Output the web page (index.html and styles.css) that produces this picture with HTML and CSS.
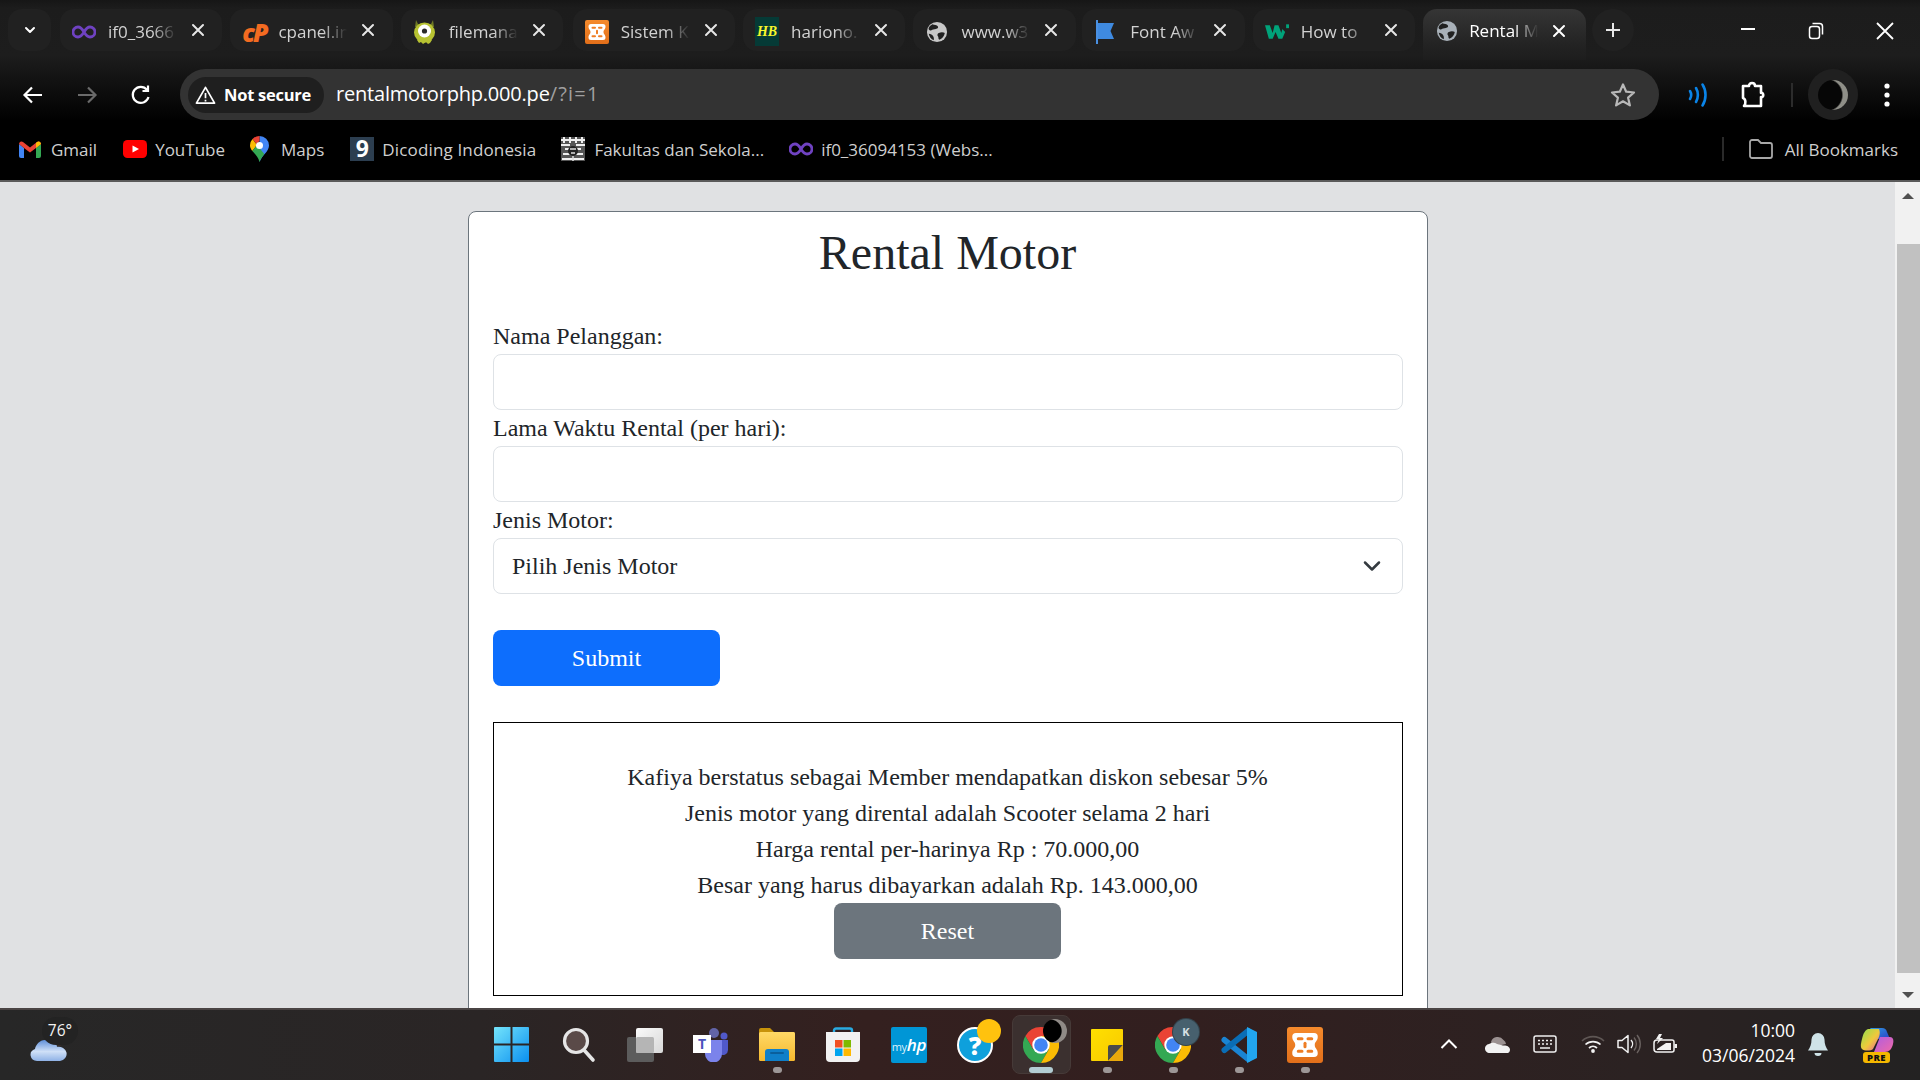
FILE: index.html
```html
<!DOCTYPE html>
<html lang="id">
<head>
<meta charset="utf-8">
<title>Rental Motor</title>
<link rel="stylesheet" href="styles.css">
</head>
<body>
<svg class="defs" width="0" height="0" aria-hidden="true">
  <defs>
    <symbol id="globe" viewBox="0 0 24 24">
      <circle cx="12" cy="12" r="11" fill="currentColor"/>
      <path d="M7 3.500c2 1 5 .5 6 2.500s-2 3-4 3-3 2-5 1-1.500-4 3-6.500zM14 13c2-1 5-1 6.500 0-.5 3.500-3 6.500-6 7.500-1.500-1-.5-3-1.500-4s-.5-3 1-3.500zM3 14c2 0 4 1 5 3s.5 3 .5 4C5.500 20 3.500 17 3 14z" fill="#212121"/>
    </symbol>
    <symbol id="infinity" viewBox="0 0 24 14">
      <path d="M12 7C10 3.500 8 2 6 2a5 5 0 0 0 0 10c2 0 4-1.500 6-5zm0 0c2 3.500 4 5 6 5a5 5 0 0 0 0-10c-2 0-4 1.500-6 5z" fill="none" stroke="#6f42c1" stroke-width="2.800"/>
    </symbol>
    <symbol id="close" viewBox="0 0 14 14">
      <path d="M2 2l10 10M12 2L2 12" stroke="currentColor" stroke-width="2" stroke-linecap="round"/>
    </symbol>
    <linearGradient id="xg" x1="0" y1="0" x2="0" y2="1"><stop offset="0" stop-color="#f58a2c"/><stop offset="1" stop-color="#e26f1a"/></linearGradient>
    <symbol id="xampp" viewBox="0 0 24 24">
      <rect width="24" height="24" rx="2" fill="url(#xg)"/>
      <path d="M3.500 6.500a2.500 2.500 0 0 1 2.500-2.500h12a2.500 2.500 0 0 1 2.500 2.500c0 3-2 3-2 5.500s2 2.500 2 5.500a2.500 2.500 0 0 1-2.500 2.500H6a2.500 2.500 0 0 1-2.500-2.500c0-3 2-3 2-5.500s-2-2.500-2-5.500z" fill="#fff"/>
      <path d="M7.500 7.800h2.500M14 7.800h2.500M7.500 16.200h2.500M14 16.200h2.500" stroke="#ee7d24" stroke-width="2" stroke-linecap="round"/>
      <path d="M12 10.800v2.400" stroke="#ee7d24" stroke-width="2" stroke-linecap="round"/>
    </symbol>
    <symbol id="chrome" viewBox="0 0 36 36">
      <path d="M18 18L10.200 22.500 2.410 9A18 18 0 0 1 33.590 9H18z" fill="#ea4335"/>
      <path d="M18 18L25.800 22.500 18 36A18 18 0 0 1 2.410 9L10.200 22.500z" fill="#34a853"/>
      <path d="M18 18V9H33.590A18 18 0 0 1 18 36L25.800 22.500z" fill="#fbbc04"/>
      <circle cx="18" cy="18" r="8.700" fill="#fff"/>
      <circle cx="18" cy="18" r="6.800" fill="#4285f4"/>
    </symbol>
  </defs>
</svg>

<div class="screen">
  <header class="chrome">
    <div class="tabstrip">
      <div class="tab-menu">
        <svg width="14" height="14" viewBox="0 0 14 14"><path d="M3 5l4 4 4-4" fill="none" stroke="#fff" stroke-width="2" stroke-linecap="round" stroke-linejoin="round"/></svg>
      </div>
      <div class="tabs">
        <div class="tab">
          <span class="favicon"><svg width="24" height="14"><use href="#infinity"/></svg></span>
          <span class="tab-title">if0_3666</span>
          <svg class="tab-close" width="14" height="14"><use href="#close"/></svg>
        </div>
        <div class="tab">
          <span class="favicon"><span class="cp-icon">cP</span></span>
          <span class="tab-title">cpanel.in</span>
          <svg class="tab-close" width="14" height="14"><use href="#close"/></svg>
        </div>
        <div class="tab">
          <span class="favicon">
            <svg width="21" height="24" viewBox="0 0 21 24"><path d="M2 0l2 4h13l2-4 1 7H1z" fill="#6f7a24"/><ellipse cx="10.500" cy="12.500" rx="10.500" ry="10" fill="#b7c232"/><path d="M3 20l2 3 2-1 2 2 3-2 2 2 2-1 2-3z" fill="#b7c232"/><circle cx="10.500" cy="11" r="6.500" fill="#fff"/><circle cx="10.500" cy="11" r="2.600" fill="#2a2a2a"/></svg>
          </span>
          <span class="tab-title">filemana</span>
          <svg class="tab-close" width="14" height="14"><use href="#close"/></svg>
        </div>
        <div class="tab tab-push">
          <span class="favicon"><svg width="24" height="24"><use href="#xampp"/></svg></span>
          <span class="tab-title">Sistem K</span>
          <svg class="tab-close" width="14" height="14"><use href="#close"/></svg>
        </div>
        <div class="tab">
          <span class="favicon"><span class="hb-icon">HB</span></span>
          <span class="tab-title">hariono.</span>
          <svg class="tab-close" width="14" height="14"><use href="#close"/></svg>
        </div>
        <div class="tab tab-pull">
          <span class="favicon globe-icon"><svg width="22" height="22"><use href="#globe"/></svg></span>
          <span class="tab-title">www.w3</span>
          <svg class="tab-close" width="14" height="14"><use href="#close"/></svg>
        </div>
        <div class="tab">
          <span class="favicon">
            <svg width="20" height="24" viewBox="0 0 20 24"><path d="M1 0v24" stroke="#4a90e2" stroke-width="2"/><path d="M2 3h16l-3.500 8 3.500 8H2z" fill="#3f8ae0"/></svg>
          </span>
          <span class="tab-title">Font Aw</span>
          <svg class="tab-close" width="14" height="14"><use href="#close"/></svg>
        </div>
        <div class="tab">
          <span class="favicon">
            <svg width="25" height="16" viewBox="0 0 25 16"><path d="M0 1h5l3 8 2-8h4l3 8 1-4 3 3-3 7h-4l-3-7-3 7H4z" fill="#00a37a"/><path d="M22 0h3v4h-3z" fill="#00a37a"/></svg>
          </span>
          <span class="tab-title">How to</span>
          <svg class="tab-close" width="14" height="14"><use href="#close"/></svg>
        </div>
        <div class="tab tab-active">
          <span class="favicon globe-icon-active"><svg width="22" height="22"><use href="#globe"/></svg></span>
          <span class="tab-title">Rental M</span>
          <svg class="tab-close" width="14" height="14"><use href="#close"/></svg>
        </div>
      </div>
      <div class="new-tab">
        <svg width="16" height="16" viewBox="0 0 16 16"><path d="M8 1v14M1 8h14" stroke="#e8e8e8" stroke-width="2"/></svg>
      </div>
      <div class="win-controls">
        <svg width="16" height="16" viewBox="0 0 16 16"><path d="M1 6h14" stroke="#fff" stroke-width="2"/></svg>
        <svg width="16" height="18" viewBox="0 0 16 18"><rect x="1.500" y="4.500" width="10" height="12" rx="2.500" fill="none" stroke="#fff" stroke-width="1.500"/><path d="M4.500 1.500h7a3 3 0 0 1 3 3v8" fill="none" stroke="#fff" stroke-width="1.500"/></svg>
        <svg width="18" height="18" viewBox="0 0 18 18"><path d="M1 1l16 16M17 1L1 17" stroke="#fff" stroke-width="1.800"/></svg>
      </div>
    </div>

    <div class="toolbar">
      <div class="nav-btn">
        <svg width="22" height="22" viewBox="0 0 22 22"><path d="M20 11H3M10 3.500L2.500 11l7.500 7.500" fill="none" stroke="#fff" stroke-width="2.200"/></svg>
      </div>
      <div class="nav-btn">
        <svg width="22" height="22" viewBox="0 0 22 22"><path d="M2 11h17M12 3.500l7.500 7.500-7.500 7.500" fill="none" stroke="#6a6a6a" stroke-width="2.200"/></svg>
      </div>
      <div class="nav-btn">
        <svg width="22" height="22" viewBox="0 0 22 22"><path d="M18.500 13a8 8 0 1 1-1.500-7.200M18 1.500V7h-5.500" fill="none" stroke="#fff" stroke-width="2.200"/></svg>
      </div>
      <div class="omnibox">
        <div class="chip">
          <svg width="21" height="20" viewBox="0 0 22 20"><path d="M11 2L1.500 18.500h19z" fill="none" stroke="#fff" stroke-width="1.800" stroke-linejoin="round"/><path d="M11 8v5.500M11 15v1.800" stroke="#fff" stroke-width="1.800"/></svg>
          <span class="chip-text">Not secure</span>
        </div>
        <span class="url">rentalmotorphp.000.pe<span class="url-dim">/?i=1</span></span>
        <svg class="star" width="26" height="26" viewBox="0 0 26 26"><path d="M13 2.500l3.200 7.200 7.800.8-5.900 5.200 1.800 7.700L13 19.300l-6.900 4.100 1.800-7.700L2 10.500l7.800-.8z" fill="none" stroke="#b8b8b8" stroke-width="2.200" stroke-linejoin="round"/></svg>
      </div>
      <div class="tool-btn">
        <svg width="22" height="26" viewBox="0 0 22 26"><path d="M3 9c1.500 2.500 1.500 5.500 0 8M9 6c2.500 4 2.500 10 0 14M15.500 2.500c4 6 4 15 0 21" fill="none" stroke="#0a84e8" stroke-width="2.600" stroke-linecap="round"/></svg>
      </div>
      <div class="tool-btn">
        <svg width="26" height="28" viewBox="0 0 26 28"><path d="M3 5h6c0-4 6-4 6 0h6v7c3-1 3 5 0 4v9H4c2-2 2-7-1-8z" fill="none" stroke="#fff" stroke-width="2.600" stroke-linejoin="round"/></svg>
      </div>
      <div class="tool-sep"></div>
      <div class="avatar">
        <span class="moon"></span>
      </div>
      <div class="tool-btn">
        <svg width="6" height="26" viewBox="0 0 6 26"><circle cx="3" cy="4" r="2.600" fill="#fff"/><circle cx="3" cy="13" r="2.600" fill="#fff"/><circle cx="3" cy="22" r="2.600" fill="#fff"/></svg>
      </div>
    </div>

    <nav class="bookmarks">
      <a class="bm bm-gmail">
        <svg width="22" height="18" viewBox="0 0 22 18"><path d="M0 4v12a2 2 0 0 0 2 2h3V8z" fill="#4285f4"/><path d="M22 4v12a2 2 0 0 1-2 2h-3V8z" fill="#34a853"/><path d="M0 4a2.500 2.500 0 0 1 4-2l7 5.500L18 2a2.500 2.500 0 0 1 4 2l-5 4-6 4.500L5 8z" fill="#ea4335"/><path d="M17 8l5-4a2.500 2.500 0 0 0-4-2l-1 1z" fill="#fbbc04"/></svg>
        <span>Gmail</span>
      </a>
      <a class="bm bm-yt">
        <svg width="24" height="18" viewBox="0 0 24 18"><rect width="24" height="18" rx="4.500" fill="#f00"/><path d="M9.500 5.500l6.500 3.500-6.500 3.500z" fill="#fff"/></svg>
        <span>YouTube</span>
      </a>
      <a class="bm bm-maps">
        <svg width="19" height="26" viewBox="0 0 19 26"><path d="M9.500 0A9.500 9.500 0 0 1 19 9.500c0 6-6.500 9-9.500 16.500z" fill="#4285f4"/><path d="M9.500 0A9.500 9.500 0 0 0 2.500 3l4 5 3-3z" fill="#ea4335"/><path d="M2.500 3A9.500 9.500 0 0 0 0 9.500c0 2 1 3.800 2.300 5.500L7 9z" fill="#fbbc04"/><path d="M2.300 15c2.700 3 5.800 6 7.200 11 1-3 3-5.500 4.800-8L7 9z" fill="#34a853"/><circle cx="9.500" cy="9.500" r="3.500" fill="#fff"/></svg>
        <span>Maps</span>
      </a>
      <a class="bm bm-dicoding">
        <span class="dicoding-icon">9</span>
        <span class="dicoding-text">Dicoding Indonesia</span>
      </a>
      <a class="bm bm-fakultas">
        <svg width="24" height="24" viewBox="0 0 24 24"><rect width="24" height="24" fill="#555"/><path d="M0 3h24M0 8h9M15 8h9M3 0v6M9 0v6M15 0v6M21 0v6M4 12h16M2 17h7M15 17h7M1 22h22" stroke="#eee" stroke-width="2"/><circle cx="12" cy="14" r="5" fill="#222"/><path d="M9 12h6M10 16h4M12 19v5" stroke="#ddd" stroke-width="1.500"/></svg>
        <span>Fakultas dan Sekola...</span>
      </a>
      <a class="bm bm-free">
        <svg width="24" height="14"><use href="#infinity"/></svg>
        <span>if0_36094153 (Webs...</span>
      </a>
      <div class="bm-sep"></div>
      <a class="bm bm-all">
        <svg width="24" height="20" viewBox="0 0 24 20"><path d="M1 3a2 2 0 0 1 2-2h6l3 3h9a2 2 0 0 1 2 2v11a2 2 0 0 1-2 2H3a2 2 0 0 1-2-2z" fill="none" stroke="#a8a8a8" stroke-width="1.800"/></svg>
        <span>All Bookmarks</span>
      </a>
    </nav>
  </header>

  <div class="viewport">
    <main class="page">
      <section class="card">
        <h1 class="title">Rental Motor</h1>
        <form class="form">
          <label class="label" for="nama">Nama Pelanggan:</label>
          <input class="control" id="nama" type="text">
          <label class="label" for="lama">Lama Waktu Rental (per hari):</label>
          <input class="control" id="lama" type="text">
          <label class="label" for="jenis">Jenis Motor:</label>
          <div class="select-wrap">
            <select class="control select" id="jenis">
              <option>Pilih Jenis Motor</option>
            </select>
            <svg class="select-arrow" width="18" height="14" viewBox="0 0 18 14"><path d="M2 3.500l7 7 7-7" fill="none" stroke="#343a40" stroke-width="2.500" stroke-linecap="round" stroke-linejoin="round"/></svg>
          </div>
          <button class="btn btn-primary" type="button">Submit</button>
        </form>
        <div class="result">
          <p class="result-line">Kafiya berstatus sebagai Member mendapatkan diskon sebesar 5%</p>
          <p class="result-line">Jenis motor yang dirental adalah Scooter selama 2 hari</p>
          <p class="result-line">Harga rental per-harinya Rp : 70.000,00</p>
          <p class="result-line">Besar yang harus dibayarkan adalah Rp. 143.000,00</p>
          <button class="btn btn-secondary" type="button">Reset</button>
        </div>
      </section>
    </main>
    <aside class="scrollbar">
      <div class="sb-btn"><span class="tri-up"></span></div>
      <div class="sb-track"><div class="sb-thumb"></div></div>
      <div class="sb-btn"><span class="tri-down"></span></div>
    </aside>
  </div>

  <footer class="taskbar">
    <div class="tb-left">
      <div class="weather">
        <svg class="cloud" width="38" height="23" viewBox="0 0 38 26" preserveAspectRatio="none"><defs><linearGradient id="cl" x1="0" y1="0" x2="0" y2="1"><stop offset="0" stop-color="#5f8fd8"/><stop offset=".55" stop-color="#cfe0f7"/><stop offset="1" stop-color="#8fb2e6"/></linearGradient></defs><rect x="24" y="2" width="8" height="6" fill="#e8742a"/><path d="M8 26a7 7 0 0 1-2-13.500C7 6 13 0 19 3c6 0 9 4 9 7a8 8 0 0 1 3 16z" fill="url(#cl)"/></svg>
        <span class="temp">76°</span>
      </div>
    </div>
    <div class="tb-center">
      <div class="tb-item tb-start">
        <svg width="35" height="35" viewBox="0 0 35 35"><defs><linearGradient id="w1" x1="0" y1="0" x2="1" y2="1"><stop offset="0" stop-color="#74e4fb"/><stop offset="1" stop-color="#0a8ff0"/></linearGradient></defs><path d="M1 0h15.500v16.500H0V1a1 1 0 0 1 1-1zM18.500 0H34a1 1 0 0 1 1 1v15.500H18.500zM0 18.500h16.500V35H1a1 1 0 0 1-1-1zM18.500 18.500H35V34a1 1 0 0 1-1 1H18.500z" fill="url(#w1)"/></svg>
      </div>
      <div class="tb-item">
        <svg width="34" height="36" viewBox="0 0 34 36"><circle cx="14" cy="14" r="11.500" fill="#5a4a48" stroke="#e6e6e6" stroke-width="3.200"/><path d="M22 23l9 10" stroke="#e6e6e6" stroke-width="3.600" stroke-linecap="round"/></svg>
      </div>
      <div class="tb-item">
        <svg width="36" height="34" viewBox="0 0 36 34"><defs><linearGradient id="tv" x1="0" y1="0" x2="1" y2="1"><stop offset="0" stop-color="#fafafa"/><stop offset="1" stop-color="#d8d8d8"/></linearGradient></defs><rect x="0" y="9" width="27" height="25" rx="2" fill="#5c5c5c"/><rect x="9" y="0" width="27" height="25" rx="2" fill="url(#tv)"/><rect x="9" y="9" width="18" height="16" rx="1.500" fill="#b5b5b5"/></svg>
      </div>
      <div class="tb-item">
        <svg width="36" height="34" viewBox="0 0 36 34"><circle cx="21" cy="5" r="5" fill="#6264a7"/><circle cx="31" cy="8" r="3.500" fill="#5059c9"/><path d="M26 12h9v10a5 5 0 0 1-8 4z" fill="#5059c9"/><path d="M12 12h17v14a8 8 0 0 1-17 0z" fill="#7b83eb"/></svg>
        <span class="teams-box">T</span>
      </div>
      <div class="tb-item">
        <svg width="36" height="33" viewBox="0 0 36 33"><defs><linearGradient id="f1" x1="0" y1="0" x2="0" y2="1"><stop offset="0" stop-color="#ffd966"/><stop offset="1" stop-color="#f5b82e"/></linearGradient></defs><path d="M0 2a2 2 0 0 1 2-2h9l4 4h19a2 2 0 0 1 2 2v3H0z" fill="#c8930a"/><rect y="4" width="36" height="29" rx="1.500" fill="url(#f1)"/><path d="M6 24a3 3 0 0 1 3-3h18a3 3 0 0 1 3 3v9H6z" fill="#0f7fc9"/><rect x="11" y="24" width="14" height="2" rx="1" fill="#0a5f9c"/></svg>
        <span class="run-dot"></span>
      </div>
      <div class="tb-item">
        <svg width="36" height="36" viewBox="0 0 36 36"><path d="M9 7V3.500A2 2 0 0 1 11 1.500h14a2 2 0 0 1 2 2V7" fill="none" stroke="#29abe2" stroke-width="2.400"/><path d="M1 5h34v26a4 4 0 0 1-4 4H5a4 4 0 0 1-4-4z" fill="#f2f2f2"/><rect x="10" y="13" width="7.500" height="7.500" fill="#f25022"/><rect x="18.500" y="13" width="7.500" height="7.500" fill="#7fba00"/><rect x="10" y="21.500" width="7.500" height="7.500" fill="#00a4ef"/><rect x="18.500" y="21.500" width="7.500" height="7.500" fill="#ffb900"/></svg>
      </div>
      <div class="tb-item">
        <span class="myhp">my<i>hp</i></span>
      </div>
      <div class="tb-item">
        <svg width="36" height="36" viewBox="0 0 36 36"><circle cx="18" cy="18" r="17" fill="#0ea0dc" stroke="#fff" stroke-width="2"/></svg>
        <span class="help-mark">?</span>
        <span class="help-badge"></span>
      </div>
      <div class="tb-item tb-active">
        <svg width="36" height="36"><use href="#chrome"/></svg>
        <span class="chrome-badge"></span>
        <span class="run-bar"></span>
      </div>
      <div class="tb-item">
        <svg width="32" height="32" viewBox="0 0 32 32"><defs><linearGradient id="st" x1="0" y1="0" x2="1" y2="1"><stop offset="0" stop-color="#ffe000"/><stop offset="1" stop-color="#f8c800"/></linearGradient></defs><rect width="32" height="32" rx="1" fill="url(#st)"/><path d="M17 32V18a2 2 0 0 1 2-2h13z" fill="#4a4a4a"/><path d="M32 16L17 32h15z" fill="#e8a80c"/></svg>
        <span class="run-dot"></span>
      </div>
      <div class="tb-item">
        <svg width="36" height="36"><use href="#chrome"/></svg>
        <span class="k-badge">K</span>
        <span class="run-dot"></span>
      </div>
      <div class="tb-item">
        <svg width="36" height="36" viewBox="0 0 36 36"><path d="M3.500 13L27 32" stroke="#1a84d2" stroke-width="6" stroke-linecap="round"/><path d="M27 4L3.500 23" stroke="#0a6db5" stroke-width="6" stroke-linecap="round"/><path d="M26 0l10 5v26l-10 5z" fill="#22a5ee"/></svg>
        <span class="run-dot"></span>
      </div>
      <div class="tb-item">
        <svg width="36" height="36"><use href="#xampp"/></svg>
        <span class="run-dot"></span>
      </div>
    </div>
    <div class="tray">
      <div class="tray-item">
        <svg width="18" height="12" viewBox="0 0 18 12"><path d="M1.500 10L9 2.500 16.500 10" fill="none" stroke="#fff" stroke-width="2"/></svg>
      </div>
      <div class="tray-item">
        <svg width="25" height="17" viewBox="0 0 25 17"><path d="M6 6a7 7 0 0 1 12.500-2A5 5 0 0 1 21 8L8 11z" fill="#9b9191"/><path d="M5 17a4.500 4.500 0 0 1-1-9c3-1 4-2 8 0l6 1.500c3-.5 7 1 7 4s-2 3.500-3 3.500z" fill="#f2f2f2"/></svg>
      </div>
      <div class="tray-item">
        <svg width="24" height="18" viewBox="0 0 24 18"><rect x="1" y="1" width="22" height="16" rx="2" fill="none" stroke="#f0f0f0" stroke-width="1.500"/><path d="M5 5.500h2M9 5.500h2M13 5.500h2M17 5.500h2M5 9h2M9 9h2M13 9h2M17 9h2M7 13h10" stroke="#f0f0f0" stroke-width="1.600"/></svg>
      </div>
      <div class="tray-item tray-wifi">
        <svg width="24" height="18" viewBox="0 0 24 18"><path d="M1 6a16 16 0 0 1 22 0" fill="none" stroke="#5e5654" stroke-width="1.600"/><path d="M4.500 9.500a11 11 0 0 1 15 0M8 13a6 6 0 0 1 8 0" fill="none" stroke="#f2f2f2" stroke-width="1.700"/><circle cx="12" cy="16" r="1.900" fill="#f2f2f2"/></svg>
      </div>
      <div class="tray-item tray-tight">
        <svg width="24" height="20" viewBox="0 0 24 20"><path d="M1 6.500h4L11 1.500v17L5 13.500H1z" fill="none" stroke="#f2f2f2" stroke-width="1.500" stroke-linejoin="round"/><path d="M14 6a6 6 0 0 1 0 8" fill="none" stroke="#f2f2f2" stroke-width="1.400"/><path d="M17 3.500a10 10 0 0 1 0 13M20 1a14 14 0 0 1 0 18" fill="none" stroke="#6a6260" stroke-width="1.400"/></svg>
      </div>
      <div class="tray-item tray-tight">
        <svg width="24" height="20" viewBox="0 0 24 20"><path d="M1 9a3 3 0 0 1 3-3h15a2 2 0 0 1 2 2v8a2 2 0 0 1-2 2H4a3 3 0 0 1-3-3z" fill="none" stroke="#f2f2f2" stroke-width="1.500"/><path d="M6 0L3 5h3l-2 5 6-6H7l2-4z" fill="#f2f2f2"/><rect x="21.500" y="10" width="2.500" height="4" fill="#f2f2f2"/><path d="M4 15l9-6h5v7H4z" fill="#f2f2f2"/></svg>
      </div>
      <div class="clock">
        <span>10:00</span>
        <span>03/06/2024</span>
      </div>
      <div class="tray-bell">
        <svg width="20" height="24" viewBox="0 0 20 24"><path d="M10 1a6.500 6.500 0 0 1 6.500 6.500c0 5 1.500 8 3.500 11H0c2-3 3.500-6 3.500-11A6.500 6.500 0 0 1 10 1z" fill="#cfe3e8"/><path d="M6.500 21h7a3.500 3 0 0 1-7 0z" fill="#cfe3e8"/></svg>
      </div>
      <div class="copilot">
        <svg width="34" height="28" viewBox="0 0 34 28"><defs><linearGradient id="cp1" x1="0" y1="0" x2="1" y2="1"><stop offset="0" stop-color="#2f9ae0"/><stop offset="1" stop-color="#2a3fc7"/></linearGradient><linearGradient id="cp2" x1="0" y1="0" x2="1" y2="1"><stop offset="0" stop-color="#8ee04e"/><stop offset=".55" stop-color="#f0c93b"/><stop offset="1" stop-color="#ea5fa0"/></linearGradient><linearGradient id="cp3" x1="0" y1="0" x2="1" y2="1"><stop offset="0" stop-color="#b05de0"/><stop offset="1" stop-color="#f06aa8"/></linearGradient></defs><path d="M10 0h12c3 0 4 1 5 4l3 7H18z" fill="url(#cp1)"/><path d="M8 1C4 3 3 7 2 11c-1 4-2 8 0 10 2 2 9 2 11 0l6-12c1-3 1-6 0-8z" fill="url(#cp2)"/><path d="M20 9h10c3 0 4 3 3 7-1 5-4 8-8 8H14z" fill="url(#cp3)"/></svg>
        <span class="pre">PRE</span>
      </div>
    </div>
  </footer>
</div>
</body>
</html>
```
FILE: styles.css
```css
* { box-sizing: border-box; }
html, body { margin: 0; height: 100%; overflow: hidden; }
.defs { position: absolute; }
.screen { width: 1920px; height: 1080px; display: flex; flex-direction: column; overflow: hidden; font-family: "Open Sans", "Liberation Sans", sans-serif; }

/* browser chrome */
.chrome { flex: none; height: 182px; background: linear-gradient(#161616 0, #1c1c1c 8px, #1d1d1d 55px, #000 122px); border-bottom: 2px solid #5a5a5a; display: flex; flex-direction: column; }
.tabstrip { height: 69px; display: flex; align-items: flex-start; padding-top: 9px; }
.tab-menu { width: 43px; height: 42px; margin-left: 8px; border-radius: 14px; background: #212121; display: flex; align-items: center; justify-content: center; }
.tabs { display: flex; gap: 8px; margin-left: 9px; }
.tab { width: 162.400px; height: 42px; border-radius: 14px; background: #212121; display: flex; align-items: center; padding: 3px 0 0 12px; color: #d2d2d2; }
.tab-push { margin-left: 1.500px; }
.tab-pull { margin-right: -1.500px; }
.tab-active { height: 51px; background: linear-gradient(#353535, #232323 70%, #1d1d1d); border-radius: 14px 14px 0 0; align-items: flex-start; padding-top: 10px; color: #fff; }
.favicon { width: 24px; height: 24px; flex: none; display: flex; align-items: center; justify-content: center; }
.globe-icon { color: #c8c8c8; }
.globe-icon-active { color: #a8b0b8; }
.hb-icon { width: 24px; height: 29px; background: #053a36; color: #f6f62b; font: italic bold 14px "Liberation Serif", serif; display: flex; align-items: center; justify-content: center; }
.cp-icon { color: #f36b21; font: italic 800 25px/18px "Open Sans", sans-serif; letter-spacing: -2px; white-space: nowrap; }
.tab-title { width: 72px; margin-left: 12px; font-size: 17px; line-height: 24px; white-space: nowrap; -webkit-mask-image: linear-gradient(90deg, #000 62%, transparent 96%); mask-image: linear-gradient(90deg, #000 62%, transparent 96%); }
.tab-close { flex: none; margin-left: 11px; color: #e6e6e6; margin-top: -3px; }
.tab-active .tab-title { margin-left: 10px; }
.tab-active .tab-close { margin-top: 5px; color: #fff; }
.new-tab { width: 42px; height: 42px; margin-left: 6px; border-radius: 50%; background: #212121; display: flex; align-items: center; justify-content: center; flex: none; }
.win-controls { margin-left: auto; width: 180px; padding: 13px 26px 0 0; display: flex; justify-content: space-between; align-items: center; }

.toolbar { height: 51px; display: flex; align-items: center; padding-left: 6px; }
.nav-btn { width: 54px; display: flex; justify-content: center; flex: none; }
.omnibox { width: 1479px; height: 51px; flex: none; margin-left: 12px; margin-right: 12px; background: #333; border-radius: 26px; display: flex; align-items: center; padding-left: 8px; padding-right: 23px; }
.chip { width: 136px; height: 36px; border-radius: 18px; background: #1f1f1f; display: flex; align-items: center; padding-left: 7px; gap: 8px; flex: none; }
.chip-text { color: #fff; font-size: 16.500px; font-weight: 700; letter-spacing: -0.250px; white-space: nowrap; }
.url { margin: -2px 0 0 12px; color: #fff; font-size: 20px; white-space: nowrap; letter-spacing: -0.200px; }
.url-dim { color: #a0a0a0; letter-spacing: 1.200px; }
.star { margin-left: auto; }
.tool-btn { width: 54px; flex: none; display: flex; justify-content: center; align-items: center; }
.tool-btn + .tool-btn { margin-left: 1px; }
.tool-sep { width: 2px; height: 24px; background: #2c2c2c; margin: 0 15px 0 11px; flex: none; }
.avatar { width: 50px; height: 51px; border-radius: 50%; background: #202020; display: flex; align-items: center; justify-content: center; flex: none; margin-right: 2px; }
.moon { width: 30px; height: 30px; border-radius: 50%; background: radial-gradient(circle at 28% 50%, #060606 58%, #8f8f88 64%); display: block; }

.bookmarks { flex: 1; display: flex; align-items: center; padding: 0 0 2px 19px; background: #000; color: #cfcfcf; font-size: 17px; }
.bm { display: flex; align-items: center; gap: 10px; white-space: nowrap; flex: none; }
.bm-yt { margin-left: 26px; gap: 8px; }
.bm-maps { margin-left: 25px; gap: 12px; }
.bm-dicoding { margin-left: 26px; gap: 8px; }
.dicoding-text { letter-spacing: .15px; }
.bm-fakultas { margin-left: 25px; gap: 9px; }
.bm-free { margin-left: 25px; gap: 8px; }
.bm-sep { width: 2px; height: 24px; background: #2a2a2a; margin-left: auto; flex: none; }
.bm-all { margin-left: 25px; margin-right: 22px; gap: 12px; }
.dicoding-icon { width: 24px; height: 24px; background: #2c3e50; color: #fff; font: 700 23px/23px "Open Sans", sans-serif; text-align: center; display: block; }

/* page */
.viewport { flex: 1; min-height: 0; display: flex; background: #e0e1e3; }
.page { flex: 1; min-width: 0; overflow: hidden; display: flex; justify-content: center; align-items: flex-start; padding: 29px 0 0 1px; font-family: "Liberation Serif", "Times New Roman", serif; color: #212529; }
.card { width: 960px; flex: none; background: #fff; border: 1px solid #6c757d; border-radius: 8px; padding: 12px 24px 40px; }
.title { margin: 0 0 36px; padding-right: 1px; font-size: 48px; line-height: 58px; font-weight: 400; text-align: center; }
.form { display: flex; flex-direction: column; align-items: stretch; }
.label { display: block; font-size: 24px; line-height: 36px; }
.control { display: block; width: 100%; height: 56px; border: 1px solid #dee2e6; border-radius: 8px; background: #fff; padding: 0 18px; font: 24px "Liberation Serif", serif; color: #212529; outline: 0; }
.select-wrap { position: relative; }
.select { appearance: none; -webkit-appearance: none; }
.select-arrow { position: absolute; right: 22px; top: 21px; }
.btn { display: block; width: 227px; height: 56px; border: 0; border-radius: 8px; font: 24px "Liberation Serif", serif; color: #fff; }
.btn-primary { background: #0d6efd; margin: 36px 0; }
.btn-secondary { background: #6c757d; margin: 0 auto; }
.result { border: 1px solid #000; padding: 36px 1px 36px 0; text-align: center; }
.result-line { margin: 0; font-size: 24px; line-height: 36px; }

/* scrollbar */
.scrollbar { width: 25px; flex: none; background: #f1f1f1; display: flex; flex-direction: column; }
.sb-btn { height: 27px; flex: none; display: flex; justify-content: center; align-items: center; }
.sb-track { flex: 1; padding: 35px 0 8px; }
.sb-thumb { height: 100%; background: #c1c1c1; margin-left: 2px; }
.tri-up { border-style: solid; border-color: transparent transparent #505050; border-width: 0 6px 6px; }
.tri-down { border-style: solid; border-color: #505050 transparent transparent; border-width: 6px 6px 0; }

/* taskbar */
.taskbar { flex: none; height: 72px; display: grid; grid-template-columns: 480px 860px 1fr; background: linear-gradient(90deg, #272727 0, #2a2525 25%, #34201f 45%, #321f1f 62%, #2b2222 85%, #232222 100%); border-top: 2px solid #4a4444; color: #fff; }
.weather { position: relative; width: 100px; height: 70px; }
.cloud { position: absolute; left: 29px; top: 28px; }
.temp { position: absolute; left: 42px; top: 7px; width: 36px; height: 28px; border-radius: 14px; background: #232323; font-size: 15.500px; line-height: 26px; text-align: center; color: #f2f2f2; }
.tb-center { display: flex; align-items: center; }
.tb-item { width: 66px; height: 60px; position: relative; flex: none; display: flex; align-items: center; justify-content: center; margin-top: -1px; }
.tb-start { padding-right: 4px; }
.tb-active::before { content: ""; position: absolute; left: 4px; right: 3px; top: 0; bottom: 1px; border-radius: 8px; background: #3b302f; border: 1px solid #463a38; }
.tb-active > svg { position: relative; }
.run-dot { position: absolute; left: 29px; bottom: 2px; width: 9px; height: 6px; border-radius: 3px; background: #9d9797; }
.run-bar { position: absolute; left: 21px; bottom: 2px; width: 24px; height: 6px; border-radius: 3px; background: #b3cdd3; }
.teams-box { position: absolute; left: 15px; top: 20px; width: 18px; height: 18px; background: #fff; color: #4b53bc; font: 700 14px/18px "Open Sans", sans-serif; text-align: center; }
.myhp { width: 36px; height: 36px; border-radius: 2px; background: #0096d6; color: #d9f0fa; font-size: 11px; line-height: 35px; text-align: center; white-space: nowrap; display: block; letter-spacing: -.3px; }
.myhp i { font-size: 17px; font-weight: 600; color: #fff; }
.help-mark { position: absolute; left: 15px; top: 15px; width: 36px; text-align: center; color: #fff; font: 800 25px/30px "Open Sans", sans-serif; }
.help-badge { position: absolute; left: 35px; top: 4px; width: 24px; height: 24px; border-radius: 50%; background: #ffc20e; }
.chrome-badge { position: absolute; left: 35px; top: 4px; width: 24px; height: 24px; border-radius: 50%; background: radial-gradient(circle at 30% 50%, #000 53%, #8f8a86 58%); }
.k-badge { position: absolute; left: 33px; top: 4px; width: 26px; height: 26px; border-radius: 50%; background: #47606e; box-shadow: 0 0 0 1px #33434c; color: #d8e0e4; font: 700 11px/26px "Open Sans", sans-serif; text-align: center; }
.tray { display: flex; align-items: center; padding: 0 0 2px 85px; }
.tray-item { width: 48px; flex: none; display: flex; justify-content: center; align-items: center; }
.tray-wifi { width: 36px; margin-left: 6px; }
.tray-tight { width: 36px; }
.clock { width: 112px; flex: none; display: flex; flex-direction: column; align-items: flex-end; font-size: 17.500px; line-height: 25px; color: #fff; padding-bottom: 2px; white-space: nowrap; }
.tray-bell { width: 46px; flex: none; display: flex; justify-content: center; }
.copilot { width: 72px; height: 44px; flex: none; position: relative; display: flex; justify-content: center; padding-top: 6px; }
.pre { position: absolute; left: 22px; top: 30px; width: 27px; height: 11px; border-radius: 3px; background: #f5b800; color: #111; font-size: 9.500px; font-weight: 800; line-height: 11px; text-align: center; letter-spacing: .5px; }
```
